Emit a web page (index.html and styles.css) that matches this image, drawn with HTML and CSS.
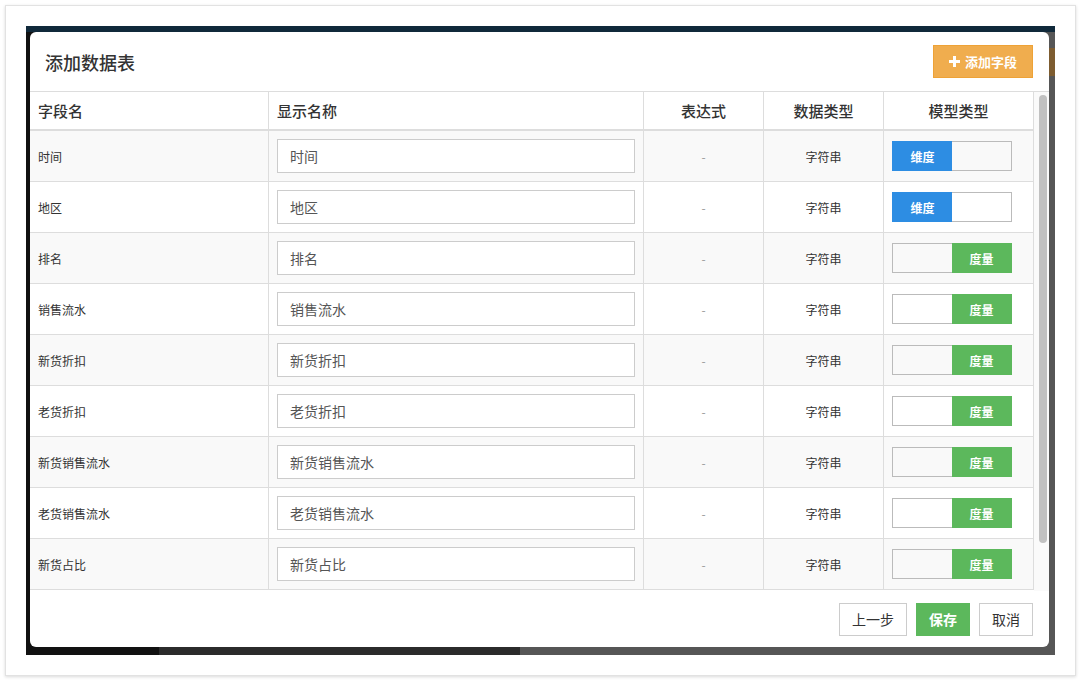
FILE: index.html
```html
<!DOCTYPE html>
<html lang="zh-CN">
<head>
    <meta charset="UTF-8">
    <meta name="viewport" content="width=device-width, initial-scale=1.0">
    <title>添加数据表</title>
    <link rel="stylesheet" href="styles.css">
</head>
<body>

    <div class="frame">
        <!-- Fondo oscuro detrás del modal -->
        <div class="backdrop">
            <div class="modal">
                <div class="modal-header">
                    <h3>添加数据表</h3>
                    <button class="btn btn-warning">
                        <svg class="icon-plus" width="11" height="11" viewBox="0 0 11 11"><path d="M4 0h3v4h4v3H7v4H4V7H0V4h4z" fill="#fff"/></svg>
                        添加字段
                    </button>
                </div>

                <div class="table-wrap">
                    <div class="table-scroll">
                        <table>
                            <colgroup>
                                <col style="width:239px">
                                <col style="width:375px">
                                <col style="width:120px">
                                <col style="width:120px">
                                <col style="width:150px">
                            </colgroup>
                            <thead>
                                <tr>
                                    <th>字段名</th>
                                    <th>显示名称</th>
                                    <th class="center">表达式</th>
                                    <th class="center">数据类型</th>
                                    <th class="center">模型类型</th>
                                </tr>
                            </thead>
                            <tbody>
                                <tr>
                                    <td>时间</td>
                                    <td><input type="text" value="时间"></td>
                                    <td class="center muted">-</td>
                                    <td class="center">字符串</td>
                                    <td><div class="toggle"><span class="on-dim">维度</span><span class="off"></span></div></td>
                                </tr>
                                <tr>
                                    <td>地区</td>
                                    <td><input type="text" value="地区"></td>
                                    <td class="center muted">-</td>
                                    <td class="center">字符串</td>
                                    <td><div class="toggle"><span class="on-dim">维度</span><span class="off"></span></div></td>
                                </tr>
                                <tr>
                                    <td>排名</td>
                                    <td><input type="text" value="排名"></td>
                                    <td class="center muted">-</td>
                                    <td class="center">字符串</td>
                                    <td><div class="toggle"><span class="off"></span><span class="on-mea">度量</span></div></td>
                                </tr>
                                <tr>
                                    <td>销售流水</td>
                                    <td><input type="text" value="销售流水"></td>
                                    <td class="center muted">-</td>
                                    <td class="center">字符串</td>
                                    <td><div class="toggle"><span class="off"></span><span class="on-mea">度量</span></div></td>
                                </tr>
                                <tr>
                                    <td>新货折扣</td>
                                    <td><input type="text" value="新货折扣"></td>
                                    <td class="center muted">-</td>
                                    <td class="center">字符串</td>
                                    <td><div class="toggle"><span class="off"></span><span class="on-mea">度量</span></div></td>
                                </tr>
                                <tr>
                                    <td>老货折扣</td>
                                    <td><input type="text" value="老货折扣"></td>
                                    <td class="center muted">-</td>
                                    <td class="center">字符串</td>
                                    <td><div class="toggle"><span class="off"></span><span class="on-mea">度量</span></div></td>
                                </tr>
                                <tr>
                                    <td>新货销售流水</td>
                                    <td><input type="text" value="新货销售流水"></td>
                                    <td class="center muted">-</td>
                                    <td class="center">字符串</td>
                                    <td><div class="toggle"><span class="off"></span><span class="on-mea">度量</span></div></td>
                                </tr>
                                <tr>
                                    <td>老货销售流水</td>
                                    <td><input type="text" value="老货销售流水"></td>
                                    <td class="center muted">-</td>
                                    <td class="center">字符串</td>
                                    <td><div class="toggle"><span class="off"></span><span class="on-mea">度量</span></div></td>
                                </tr>
                                <tr>
                                    <td>新货占比</td>
                                    <td><input type="text" value="新货占比"></td>
                                    <td class="center muted">-</td>
                                    <td class="center">字符串</td>
                                    <td><div class="toggle"><span class="off"></span><span class="on-mea">度量</span></div></td>
                                </tr>
                            </tbody>
                        </table>
                    </div>
                    <!-- barra de desplazamiento dibujada -->
                    <div class="scrollbar"><div class="thumb"></div></div>
                </div>

                <div class="modal-footer">
                    <button class="btn">上一步</button>
                    <button class="btn btn-success">保存</button>
                    <button class="btn">取消</button>
                </div>
            </div>
        </div>
    </div>

</body>
</html>
```

FILE: styles.css
```css
:root {
    --color-borde: #ddd;
    --color-verde: #5cb85c;
    --color-azul: #2d8de3;
    --color-naranja: #f0ad4e;
}

body {
    font-family: "Noto Sans CJK SC", "Noto Sans", sans-serif;
    background-color: #fff;
    color: #333;
    margin: 0;
    padding: 0;
}

.frame {
    margin: 5px;
    padding: 20px;
    border: 1px solid #e2e2e2;
    box-shadow: 0 1px 3px rgba(0, 0, 0, 0.15);
}

/* Página oscurecida debajo del modal */
.backdrop {
    height: 629px;
    box-sizing: border-box;
    padding: 6px 6px 8px 4px;
    background:
        linear-gradient(#10293a, #10293a) top left / 100% 6px no-repeat,
        linear-gradient(#7d5c30, #7d5c30) right 0 top 22px / 6px 28px no-repeat,
        linear-gradient(to right, #111 133px, #2b2b2b 133px, #2b2b2b 494px, #565656 494px);
}

.modal {
    background-color: #fff;
    border-radius: 6px;
    height: 615px;
    display: flex;
    flex-direction: column;
    overflow: hidden;
}

.modal-header {
    height: 60px;
    box-sizing: border-box;
    padding: 0 16px 0 15px;
    display: flex;
    align-items: center;
    justify-content: space-between;
    border-bottom: 1px solid var(--color-borde);
    flex-shrink: 0;
}

.modal-header h3 {
    margin: 0;
    font-size: 18px;
    font-weight: 500;
    color: #333;
}

.btn {
    height: 33px;
    padding: 0 12px;
    font-family: inherit;
    font-size: 14px;
    color: #333;
    background-color: #fff;
    border: 1px solid #ccc;
    border-radius: 0;
    cursor: pointer;
}

.btn-warning {
    width: 100px;
    background-color: var(--color-naranja);
    border-color: #eea236;
    color: #fff;
    font-size: 13px;
    font-weight: bold;
    display: flex;
    align-items: center;
    justify-content: center;
    gap: 5px;
}

.btn-success {
    background-color: var(--color-verde);
    border-color: var(--color-verde);
    color: #fff;
    font-weight: bold;
}

.table-wrap {
    flex: 1;
    min-height: 0;
    display: flex;
}

.table-scroll {
    flex: none;
    overflow: hidden;
}

.scrollbar {
    flex: 1;
    background-color: #fafafa;
    padding: 3px 2px 0 5px;
}

.thumb {
    height: 448px;
    background-color: #c1c1c1;
    border-radius: 4px;
}

table {
    width: 1004px;
    table-layout: fixed;
    border-collapse: separate;
    border-spacing: 0;
}

th, td {
    box-sizing: border-box;
    padding: 0 8px;
    border-right: 1px solid var(--color-borde);
    text-align: left;
    vertical-align: middle;
}

th {
    height: 39px;
    font-size: 15px;
    font-weight: 500;
    color: #333;
    border-bottom: 2px solid var(--color-borde);
}

td {
    height: 51px;
    font-size: 12px;
    border-bottom: 1px solid var(--color-borde);
}

tbody tr:nth-child(odd) td {
    background-color: #f9f9f9;
}

.center {
    text-align: center;
}

.muted {
    color: #999;
}

td input {
    width: 100%;
    height: 34px;
    box-sizing: border-box;
    padding: 0 12px;
    font-family: inherit;
    font-size: 14px;
    color: #555;
    background-color: #fff;
    border: 1px solid #ccc;
    border-radius: 0;
}

/* Selector dimensión / medida */
.toggle {
    display: flex;
    width: 120px;
    height: 30px;
}

.toggle span {
    flex: 1;
    box-sizing: border-box;
    display: flex;
    align-items: center;
    justify-content: center;
    font-size: 12px;
    font-weight: bold;
    color: #fff;
    border: 1px solid #bbb;
}

.toggle span:first-child {
    border-right: none;
}

.toggle span:last-child {
    border-left: none;
}

.toggle .on-dim {
    background-color: var(--color-azul);
    border-color: var(--color-azul);
}

.toggle .on-mea {
    background-color: var(--color-verde);
    border-color: var(--color-verde);
}

.modal-footer {
    height: 56px;
    flex-shrink: 0;
    box-sizing: border-box;
    padding: 0 16px;
    display: flex;
    align-items: center;
    justify-content: flex-end;
    gap: 9px;
}
```
